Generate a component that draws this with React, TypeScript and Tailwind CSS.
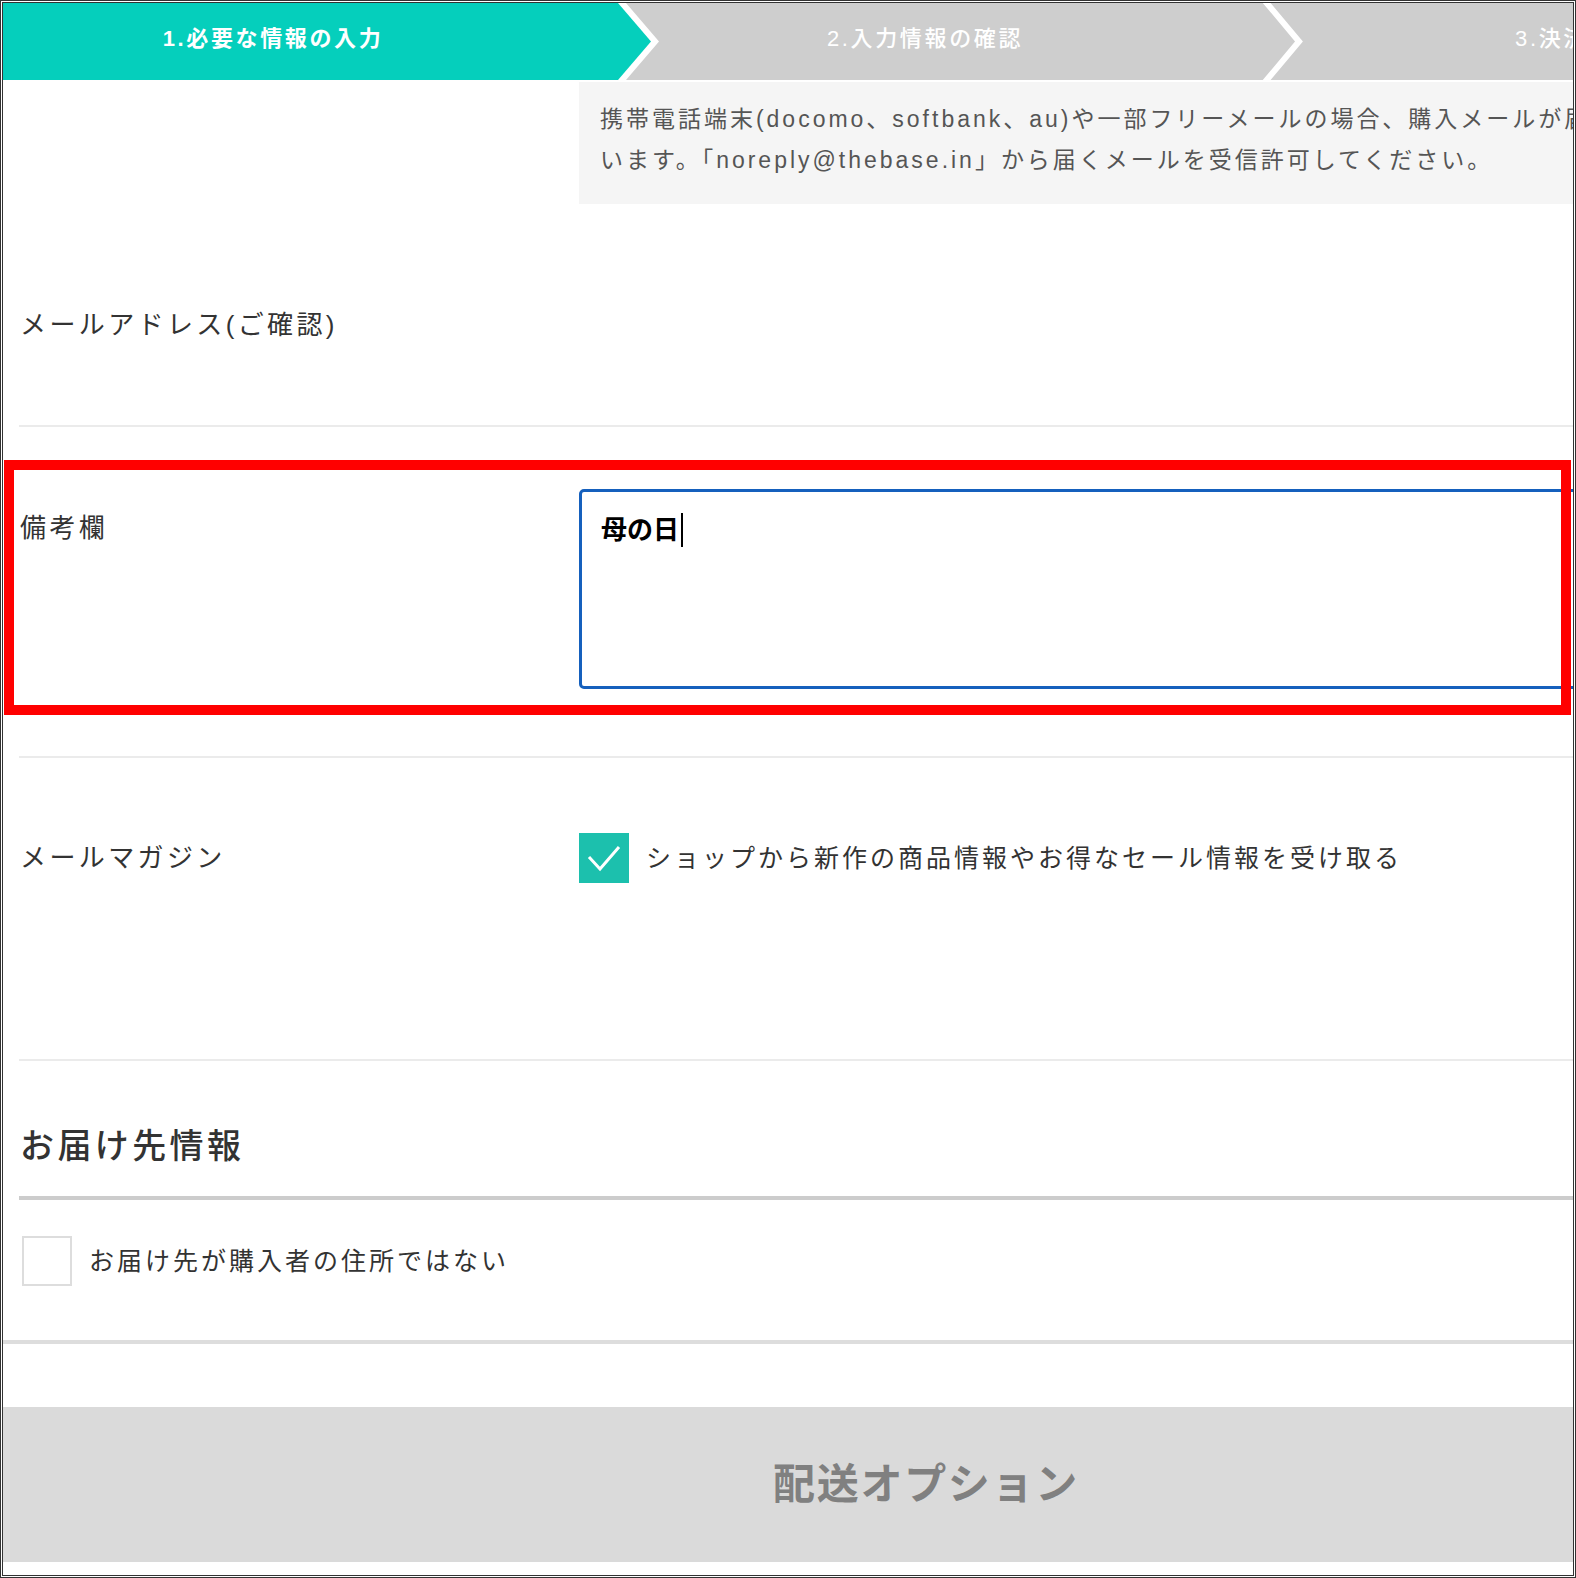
import React from 'react';

const jp = "font-['Liberation_Sans','Noto_Sans_CJK_JP',sans-serif]";

function StepBar() {
    return (
        <div className="relative h-[77px] w-full">
            <svg className="absolute inset-0" width="1846" height="77" viewBox="0 0 1846 77">
                <rect x="0" y="0" width="1846" height="77" fill="#cecece" />
                <polygon points="0,0 623,0 656,38.5 623,77 0,77" fill="#ffffff" />
                <polygon points="0,0 615,0 648,38.5 615,77 0,77" fill="#05cfbc" />
                <polyline points="1262,-2 1296,38.5 1262,79" fill="none" stroke="#ffffff" strokeWidth="6" />
            </svg>
            <div className={`relative flex h-full items-center pb-[6px] text-[22px] tracking-[0.12em] text-white ${jp}`}>
                <div className="flex w-[540px] justify-center font-bold">1.必要な情報の入力</div>
                <div className="flex w-[764px] justify-center font-medium">2.入力情報の確認</div>
                <div className="pl-[208px] font-medium">3.決済方法の選択</div>
            </div>
        </div>
    );
}

function Divider() {
    return <div className="ml-[16px] h-[2px] bg-[#ebebeb]" />;
}

export default function App() {
    return (
        <div className={`h-[1578px] w-[1576px] overflow-hidden border-[3px] border-double border-[#333] bg-white text-[#333] ${jp}`}>
            <div className="flex w-[1846px] flex-col">
                <StepBar />

                {/* notice under the mail address field */}
                <div className="ml-[576px] mt-[2px] h-[122px] bg-[#f5f5f5] px-[21px] pt-[17px] text-[23px] leading-[41px] tracking-[0.13em] text-[#555]">
                    <div className="whitespace-nowrap">携帯電話端末(docomo、softbank、au)や一部フリーメールの場合、購入メールが届かない場合がござ</div>
                    <div className="whitespace-nowrap">います。「noreply@thebase.in」から届くメールを受信許可してください。</div>
                </div>

                {/* mail address confirm */}
                <div className="h-[221px] pl-[17px] pt-[101px]">
                    <div className="text-[26px] leading-[40px] tracking-[0.13em]">メールアドレス(ご確認)</div>
                </div>
                <Divider />

                {/* remarks */}
                <div className="relative flex pb-[67px] pt-[62px]">
                    <div className="w-[576px] pl-[17px] pt-[19px] text-[26px] leading-[40px] tracking-[0.13em]">備考欄</div>
                    <div className="h-[200px] flex-1 rounded-[5px] border-[3px] border-[#1560bd] px-[19px] pt-[18px]">
                        <div className="flex items-center text-[26px] font-bold leading-[40px] text-black">
                            母の日
                            <span className="ml-[2px] inline-block h-[34px] w-[2px] bg-black" />
                        </div>
                    </div>
                    <div className="absolute left-[1px] top-[33px] h-[255px] w-[1567px] border-[10px] border-[#ff0000]" />
                </div>
                <Divider />

                {/* mail magazine */}
                <div className="flex items-center pb-[176px] pt-[75px]">
                    <div className="w-[576px] pl-[17px] text-[26px] leading-[40px] tracking-[0.13em]">メールマガジン</div>
                    <div className="flex items-center">
                        <div className="flex h-[50px] w-[50px] items-center justify-center bg-[#1cc0ad]">
                            <svg width="36" height="28" viewBox="0 0 36 28">
                                <polyline points="3,13 14,25 33,3" fill="none" stroke="#ffffff" strokeWidth="3" strokeLinejoin="miter" />
                            </svg>
                        </div>
                        <div className="ml-[17px] text-[25px] leading-[40px] tracking-[0.12em]">ショップから新作の商品情報やお得なセール情報を受け取る</div>
                    </div>
                </div>
                <Divider />

                {/* shipping address */}
                <div className="pl-[17px] pt-[61px] text-[34px] font-medium leading-[48px] tracking-[0.1em]">お届け先情報</div>
                <div className="ml-[16px] mt-[26px] h-[4px] bg-[#cccccc]" />
                <div className="flex items-center pl-[19px] pt-[36px]">
                    <div className="h-[50px] w-[50px] border-2 border-[#dddddd] bg-white" />
                    <div className="ml-[17px] text-[25px] leading-[40px] tracking-[0.12em]">お届け先が購入者の住所ではない</div>
                </div>
                <div className="mt-[54px] h-[4px] bg-[#dddddd]" />

                <div className="mt-[63px] flex h-[155px] items-center justify-center bg-[#dadada] text-[42px] font-bold tracking-[0.04em] text-[#808080]">
                    配送オプション
                </div>
            </div>
        </div>
    );
}
